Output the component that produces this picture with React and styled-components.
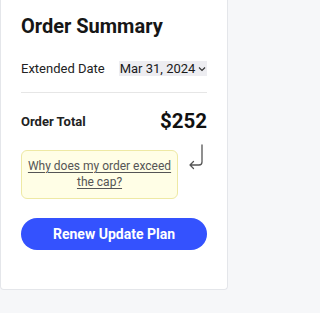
import React from "react";
import styled, { createGlobalStyle } from "styled-components";

const GlobalStyle = createGlobalStyle`
  body {
    margin: 0;
    background: #f6f7f9;
    font-family: Roboto, "Liberation Sans", sans-serif;
    color: #1a1a1a;
  }
`;

const Card = styled.section`
  width: 228px;
  box-sizing: border-box;
  background: #ffffff;
  border: 1px solid #e4e6ea;
  border-top: none;
  border-radius: 0 0 4px 4px;
  padding: 14px 20px 39px 20px;
`;

const Title = styled.h2`
  margin: 0;
  font-size: 20px;
  line-height: 24px;
  font-weight: 700;
  color: #161616;
`;

const Row = styled.div`
  display: flex;
  align-items: center;
  justify-content: ${(p) => p.justify || "flex-start"};
  gap: ${(p) => p.gap || 0}px;
  margin-top: ${(p) => p.top || 0}px;
  white-space: nowrap;
`;

const Label = styled.span`
  font-size: 13px;
  font-weight: ${(p) => (p.bold ? 700 : 400)};
  color: #222;
`;

const DateSelect = styled.button`
  display: flex;
  align-items: center;
  gap: 3px;
  height: 15px;
  padding: 0 1px;
  border: none;
  background: #ededf1;
  font-family: inherit;
  font-size: 13px;
  color: #1a1a1a;
  white-space: nowrap;
  cursor: pointer;
`;

const Divider = styled.hr`
  border: none;
  border-top: 1px solid #e6e6e6;
  margin: 16px 0 0;
`;

const Total = styled.span`
  font-size: 20.5px;
  font-weight: 700;
  color: #111;
`;

const NoteRow = styled.div`
  display: flex;
  align-items: flex-start;
  gap: 10px;
  margin-top: 17px;
`;

const Note = styled.a`
  display: block;
  width: 157px;
  box-sizing: border-box;
  padding: 7px 4px 8px;
  background: #fffee6;
  border: 1px solid #eee9a4;
  border-radius: 6px;
  font-size: 12px;
  line-height: 16px;
  text-align: center;
  color: #555;
  text-decoration: underline;
  text-underline-offset: 2px;
`;

const ArrowIcon = styled.svg`
  margin-top: -6px;
  flex: none;
`;

const Button = styled.button`
  display: block;
  width: 100%;
  height: 32px;
  margin-top: 19px;
  border: none;
  border-radius: 16px;
  background: #3452fe;
  color: #fff;
  font-family: inherit;
  font-size: 14px;
  font-weight: 700;
  cursor: pointer;
`;

const App = () => (
  <>
    <GlobalStyle />
    <Card>
      <Title>Order Summary</Title>
      <Row gap={14} top={23}>
        <Label>Extended Date</Label>
        <DateSelect>
          Mar 31, 2024
          <svg width="8" height="6" viewBox="0 0 8 6">
            <path d="M1 1.5l3 3 3-3" fill="none" stroke="#333" strokeWidth="1.2" />
          </svg>
        </DateSelect>
      </Row>
      <Divider />
      <Row justify="space-between" top={16}>
        <Label bold>Order Total</Label>
        <Total>$252</Total>
      </Row>
      <NoteRow>
        <Note href="#">Why does my order exceed the cap?</Note>
        <ArrowIcon width="18" height="28" viewBox="0 0 18 28">
          <path
            d="M14 1v17a3 3 0 0 1-3 3H2M5.5 17.5L2 21l3.5 3.5"
            fill="none"
            stroke="#555"
            strokeWidth="1.3"
            strokeLinecap="round"
            strokeLinejoin="round"
          />
        </ArrowIcon>
      </NoteRow>
      <Button>Renew Update Plan</Button>
    </Card>
  </>
);

export default App;
